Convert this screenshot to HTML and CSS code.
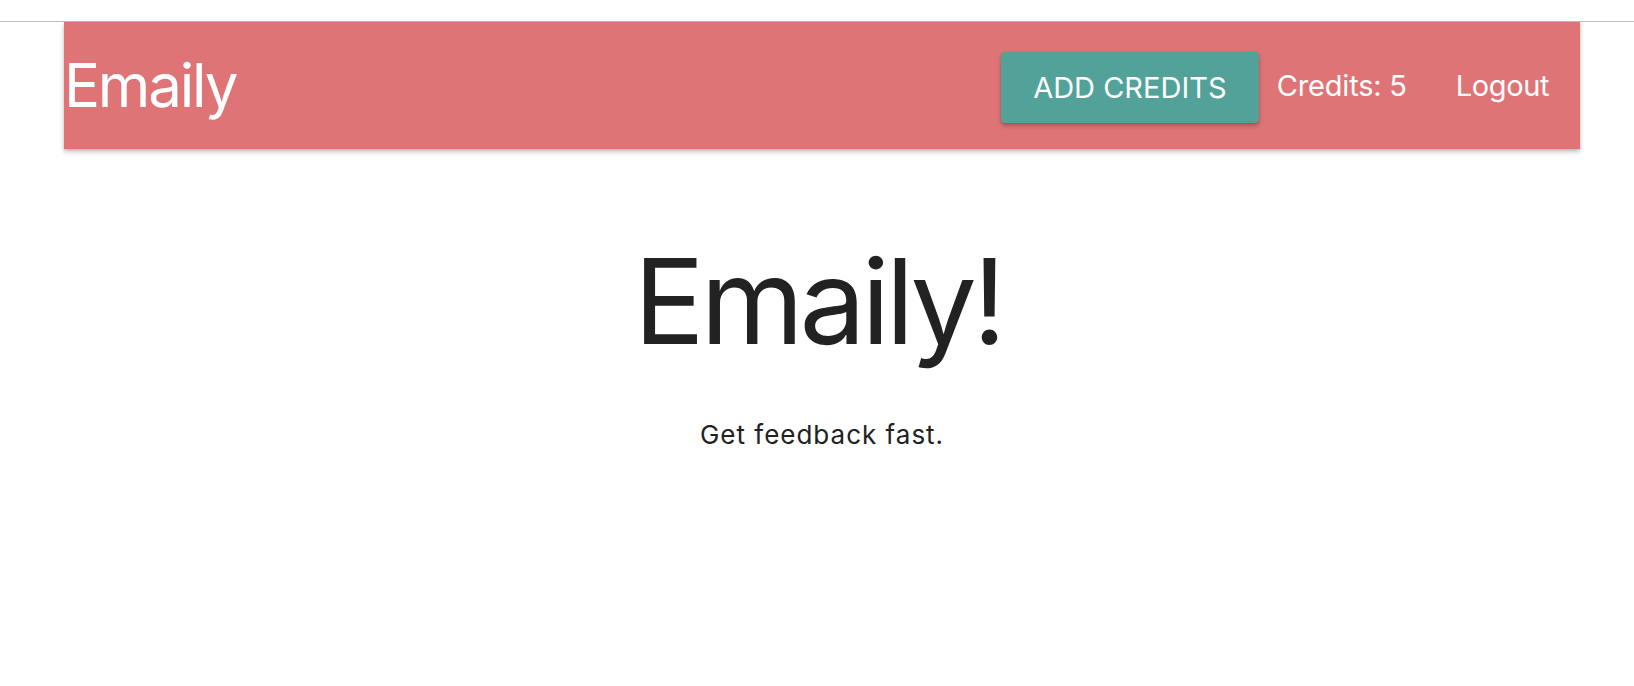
FILE: index.html
```html
<!DOCTYPE html>
<html lang="en">
<head>
<meta charset="utf-8">
<title>Emaily</title>
<link rel="stylesheet" href="styles.css">
</head>
<body>
<div class="topbar"></div>
<div class="page">
  <nav class="nav">
    <a class="brand" href="#">Emaily</a>
    <ul class="menu">
      <li class="menu-item btn-item"><button class="btn">ADD CREDITS</button></li>
      <li class="menu-item credits">Credits: 5</li>
      <li class="menu-item"><a class="link" href="#">Logout</a></li>
    </ul>
  </nav>
  <main class="hero">
    <h1 class="title">Emaily!</h1>
    <p class="subtitle">Get feedback fast.</p>
  </main>
</div>
</body>
</html>
```
FILE: styles.css
```css
html, body {
  margin: 0;
  padding: 0;
  background: #fff;
}
body {
  font-family: Inter, "Noto Sans", "DejaVu Sans", sans-serif;
  color: #212121;
  width: 1634px;
  height: 686px;
  overflow: hidden;
}
.topbar {
  height: 21px;
  border-bottom: 1px solid #bdbdbd;
  background: #fff;
}
.page {
  padding: 0 54px 0 64px;
}
.nav {
  height: 127px;
  background: #df7476;
  box-shadow: 0 3px 5px rgba(0, 0, 0, 0.22), 0 1px 2px rgba(0,0,0,0.12);
  display: flex;
  align-items: center;
  justify-content: space-between;
}
.brand {
  color: #fff;
  text-decoration: none;
  font-size: 60px;
  line-height: 127px;
  letter-spacing: -2.2px;
}
.menu {
  list-style: none;
  margin: 0;
  padding: 0;
  display: flex;
  align-items: center;
}
.menu-item {
  color: #fff;
  font-size: 29px;
  line-height: 40px;
  letter-spacing: -0.4px;
}
.btn-item {
  margin-top: 4px;
}
.btn {
  font-family: inherit;
  font-size: 29px;
  letter-spacing: 0;
  color: #fff;
  background: #52a29a;
  border: none;
  border-radius: 4px;
  height: 71px;
  width: 258px;
  padding: 0;
  box-shadow: 0 3px 5px rgba(0, 0, 0, 0.22), 0 1px 2px rgba(0,0,0,0.14);
}
.credits {
  margin: 0 19px 0 18px;
  letter-spacing: -0.2px;
}
.link {
  display: block;
  color: #fff;
  text-decoration: none;
  padding: 0 31px 0 30px;
}
.hero {
  display: flex;
  flex-direction: column;
  align-items: center;
  padding-top: 93px;
}
.title {
  margin: 0 0 0 -8px;
  font-size: 118px;
  line-height: 118px;
  font-weight: 400;
  color: #222;
  letter-spacing: -4.3px;
}
.subtitle {
  margin: 62px 0 0;
  font-size: 26px;
  line-height: 26px;
  color: #222;
  letter-spacing: 1px;
}
```
